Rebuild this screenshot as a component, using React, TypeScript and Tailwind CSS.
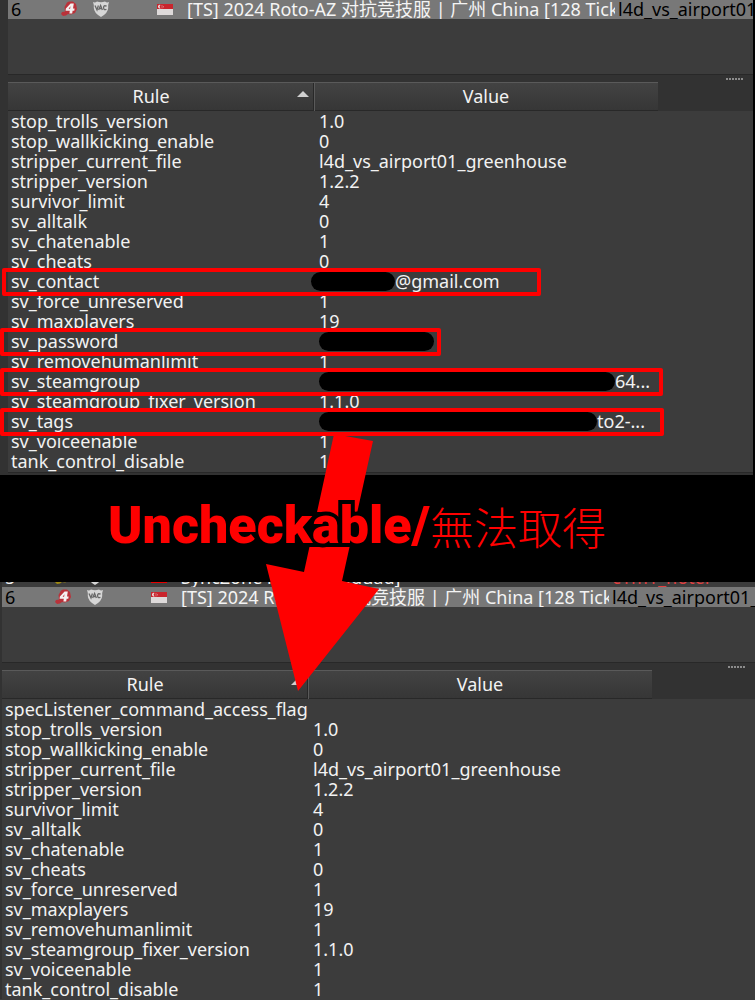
type Rule = { name: string; value: string; box?: string; pill?: string };

const fullRules: Rule[] = [
  { name: "stop_trolls_version", value: "1.0" },
  { name: "stop_wallkicking_enable", value: "0" },
  { name: "stripper_current_file", value: "l4d_vs_airport01_greenhouse" },
  { name: "stripper_version", value: "1.2.2" },
  { name: "survivor_limit", value: "4" },
  { name: "sv_alltalk", value: "0" },
  { name: "sv_chatenable", value: "1" },
  { name: "sv_cheats", value: "0" },
  { name: "sv_contact", value: "@gmail.com", box: "left-[-6px] w-[539px]", pill: "-ml-2 w-[84px]" },
  { name: "sv_force_unreserved", value: "1" },
  { name: "sv_maxplayers", value: "19" },
  { name: "sv_password", value: "", box: "-left-2 w-[441px]", pill: "w-[115px]" },
  { name: "sv_removehumanlimit", value: "1" },
  { name: "sv_steamgroup", value: "64...", box: "-left-2 w-[663px]", pill: "w-[296px]" },
  { name: "sv_steamgroup_fixer_version", value: "1.1.0" },
  { name: "sv_tags", value: "to2-...", box: "-left-2 w-[664px]", pill: "w-[278px]" },
  { name: "sv_voiceenable", value: "1" },
  { name: "tank_control_disable", value: "1" },
];

const publicRules: Rule[] = [
  { name: "specListener_command_access_flag", value: "" },
  ...fullRules.filter((r) => !r.pill),
];

function GameIcon({ tone = "#b9323a" }: { tone?: string }) {
  return (
    <svg viewBox="0 0 16 16" className="h-4 w-4 shrink-0" aria-hidden="true">
      <path d="M6 1.5 L8 0.5 H12 L15 3 L16 8 L14 12 L10 13.5 L7 13 L5 14.5 L2 15 L0 13 L1 11 L4 10.5 L3.5 6 Z" fill={tone} />
      <path d="M9.6 2.5 H12.8 L12 7.6 H13.6 L13.3 9.8 H11.6 L11.2 12.4 H8.4 L8.8 9.8 H4.6 L4.9 7.6 Z M9.5 5.2 L7.6 7.7 H9.1 Z" fill="#f4f0f0" fillRule="evenodd" />
    </svg>
  );
}

function VacIcon() {
  return (
    <svg viewBox="0 0 16 16" className="h-4 w-4 shrink-0" aria-hidden="true">
      <path d="M0 1 Q2 2 4 0.5 Q8 2 12 0.5 Q14 2 16 1 Q14.8 4 15.2 7 Q15 12 8 16 Q1 12 0.8 7 Q1.2 4 0 1 Z" fill="#d6d6d6" />
      <path d="M2 4.5 L4 9 L5.4 4.5 M5.6 9 L7.6 4.5 L9.4 9 M6.4 7.6 H8.8 M13.6 5.2 Q10.4 3.8 10.6 6.8 Q10.8 9.6 13.4 8.2" fill="none" stroke="#686868" strokeWidth="1.3" />
    </svg>
  );
}

function FlagIcon({ lower = "#dedada" }: { lower?: string }) {
  return (
    <svg viewBox="0 0 16 11" className="h-[11px] w-4 shrink-0" aria-hidden="true">
      <rect width="16" height="11" fill={lower} />
      <rect width="16" height="5" fill="#c9252d" />
      <path d="M3.6 1 A1.8 1.8 0 1 0 3.6 4.2 A1.8 1.8 0 0 1 3.6 1 Z" fill="#f0dcdc" />
      <path d="M4.6 1.6 h0.8 v0.8 h-0.8 z M6 2.4 h0.8 v0.8 h-0.8 z M4.6 3.4 h0.8 v0.8 h-0.8 z" fill="#f0dcdc" />
    </svg>
  );
}

type Server = { no: string; name: string; map: string };

function ServerRow({ server, selected }: { server: Server; selected?: boolean }) {
  return (
    <div
      className={`flex h-5 w-full shrink-0 items-center overflow-hidden whitespace-nowrap pl-[3px] ${
        selected ? "bg-[#787878] text-black" : "bg-[#3c3c3c] text-[#f0f0f0]"
      }`}
    >
      <span className="w-[50px] shrink-0">{server.no}</span>
      <GameIcon tone={selected ? undefined : "#a08a10"} />
      <span className="ml-4 flex"><VacIcon /></span>
      <span className="ml-12 flex"><FlagIcon lower={selected ? undefined : "#e60000"} /></span>
      <span className="ml-[14px] w-[428px] shrink-0 overflow-hidden text-[#f4f4f4]">{server.name}</span>
      <span className={`min-w-0 flex-1 overflow-hidden pl-[3px] ${selected ? "" : "text-[#e04040]"}`}>{server.map}</span>
    </div>
  );
}

const selectedServer: Server = {
  no: "6",
  name: "[TS] 2024 Roto-AZ 对抗竞技服 | 广州 China [128 Tick]",
  map: "l4d_vs_airport01_greenhouse",
};

function Splitter() {
  return (
    <div className="flex h-[7px] items-center justify-end gap-px bg-[#323232] pr-[10px]">
      {[0, 1, 2, 3, 4, 5].map((i) => (
        <i key={i} className="h-[2px] w-[2px] bg-[#8c8c8c]" />
      ))}
    </div>
  );
}

function RulesTable({ rules }: { rules: Rule[] }) {
  return (
    <table className="w-full table-fixed border-collapse text-left leading-5">
      <colgroup>
        <col className="w-[306px]" />
        <col className="w-[344px]" />
        <col />
      </colgroup>
      <thead>
        <tr className="h-[29px]">
          <th className="relative bg-linear-to-b from-[#434343] to-[#363636] p-0 pr-5 pb-[2px] text-center font-normal shadow-[inset_0_1px_#5a5a5a,inset_-1px_-1px_#282828]">
            Rule
            <svg viewBox="0 0 12 6" className="absolute right-[5px] top-[9px] h-[6px] w-3" aria-hidden="true">
              <path d="M6 0 L12 6 H0 Z" fill="#d0d0d0" />
            </svg>
          </th>
          <th className="bg-linear-to-b from-[#434343] to-[#363636] p-0 pb-[2px] text-center font-normal shadow-[inset_1px_1px_#5a5a5a,inset_0_-1px_#282828]">Value</th>
          <td className="bg-[#323232] p-0" />
        </tr>
      </thead>
      <tbody>
        {rules.map((r) => (
          <tr key={r.name} className="h-5">
            <td className="relative whitespace-nowrap p-0 pl-[3px]">
              {r.name}
              {r.box && <span className={`absolute -top-[3px] z-10 h-7 rounded-[2px] border-4 border-[#ff0000] ${r.box}`} />}
            </td>
            <td className="p-0 pl-[5px]">
              <span className="flex h-5 items-center">
                {r.pill && <span className={`h-[19px] shrink-0 rounded-full bg-black ${r.pill}`} />}
                {r.value}
              </span>
            </td>
            <td className="p-0" />
          </tr>
        ))}
      </tbody>
    </table>
  );
}

export default function App() {
  return (
    <main className="relative min-h-screen overflow-hidden bg-[#3c3c3c] font-['Noto_Sans','Noto_Sans_CJK_SC',sans-serif] text-[18px] leading-5 text-[#f2f2f2]">
      <section className="border-r-2 border-black bg-[#323232] pb-[2px] pl-2">
        <div className="h-[75px] border-b border-[#282828] bg-[#3c3c3c]">
          <div className="flex h-[19px] items-end overflow-hidden">
            <ServerRow server={selectedServer} selected />
          </div>
        </div>
        <Splitter />
        <div className="border-b border-[#282828] bg-[#3c3c3c] pb-px">
          <RulesTable rules={fullRules} />
        </div>
      </section>

      <div className="flex h-[107px] items-center bg-black pb-[6px] pl-[108px]">
        <h1 className="relative z-30 flex items-center whitespace-nowrap leading-none text-[#ff0000]">
          <span className="font-['Roboto','Liberation_Sans',sans-serif] text-[52px] font-black [paint-order:stroke_fill] [-webkit-text-stroke:8px_#000]">
            Uncheckable/
          </span>
          <span className="font-['Noto_Sans_CJK_TC',sans-serif] text-[44px] font-light">無法取得</span>
        </h1>
      </div>

      <section className="bg-[#323232] pl-[2px]">
        <div className="h-[81px] border-b border-[#282828] bg-[#3c3c3c]">
          <div className="flex h-[5px] items-end overflow-hidden">
            <ServerRow server={{ no: "5", name: "SyncZone l4d2 - Baoduad]", map: "c1m1_hotel" }} />
          </div>
          <ServerRow server={selectedServer} selected />
        </div>
        <Splitter />
        <div className="bg-[#3c3c3c]">
          <RulesTable rules={publicRules} />
        </div>
      </section>

      <svg viewBox="0 0 114 258" className="pointer-events-none absolute left-[266px] top-[434px] z-20 h-[258px] w-[114px]" aria-hidden="true">
        <path d="M68 0 L107 7 L76 147 L113 155 L32 257 L0 130 L38 138 Z" fill="#ff0000" />
      </svg>
    </main>
  );
}
